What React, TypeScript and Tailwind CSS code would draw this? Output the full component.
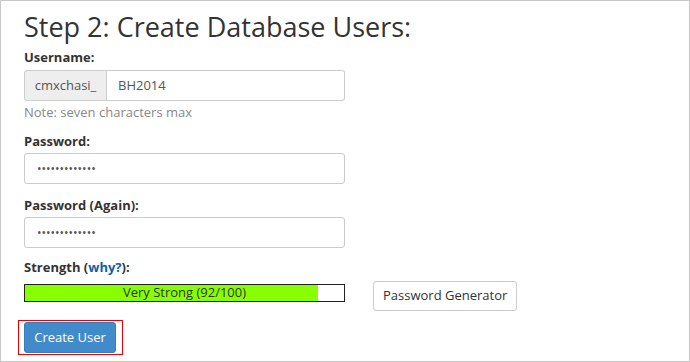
import React from 'react';

const font = { fontFamily: '"Open Sans", Arial, sans-serif' };

const Label: React.FC<{ children: React.ReactNode; className?: string }> = ({ children, className = '' }) => (
  <div className={`text-[13px] font-bold text-[#333] leading-[18px] ${className}`}>{children}</div>
);

const PasswordInput: React.FC = () => (
  <div className="w-[321px] h-[31px] border border-[#ccc] rounded-[3px] bg-white flex items-center px-[12px] text-[#555] text-[12px]">
    •••••••••••••
  </div>
);

export default function App() {
  return (
    <div className="w-[690px] h-[362px] bg-white border border-[#c8c8c8] overflow-hidden" style={font}>
      <div className="pl-[23px] pt-[8px]">
        <h1 className="text-[27px] leading-[36px] text-[#333] font-normal">Step 2: Create Database Users:</h1>

        <div className="mt-[3px]">
          <Label>Username:</Label>
          <div className="flex w-[321px] h-[31px] mt-[4px] text-[13px]">
            <div className="w-[83px] bg-[#eee] border border-[#ccc] rounded-l-[3px] flex items-center justify-center text-[#555]">
              cmxchasi_
            </div>
            <div className="flex-1 border border-l-0 border-[#ccc] rounded-r-[3px] flex items-center pl-[11px] text-[#555]">
              BH2014
            </div>
          </div>
          <div className="text-[13px] text-[#888] leading-[18px] mt-[2px]">Note: seven characters max</div>
        </div>

        <div className="mt-[11px]">
          <Label className="mb-[3px]">Password:</Label>
          <PasswordInput />
        </div>

        <div className="mt-[12px]">
          <Label className="mb-[3px]">Password (Again):</Label>
          <PasswordInput />
        </div>

        <div className="mt-[10px]">
          <Label>
            Strength (<span className="text-[#0e5fab]">why?</span>):
          </Label>
          <div className="flex items-start">
            <div className="relative w-[321px] h-[18px] border border-[#222] bg-white mt-[8px]">
              <div className="h-full w-[92%] bg-[#88ff00]" />
              <div className="absolute inset-0 flex items-center justify-center text-[13px] text-[#333]">
                Very Strong (92/100)
              </div>
            </div>
            <button className="ml-[28px] mt-[5px] h-[30px] px-[9px] border border-[#ccc] rounded-[3px] bg-white text-[13px] text-[#333]">
              Password Generator
            </button>
          </div>
        </div>

        <div className="mt-[9px] -ml-[6px] w-[105px] h-[35px] border border-[#e00] pt-[1px] pl-[5px]">
          <button className="w-[92px] h-[31px] rounded-[3px] bg-[#428bca] border border-[#357ebd] text-white text-[13px]">
            Create User
          </button>
        </div>
      </div>
    </div>
  );
}
